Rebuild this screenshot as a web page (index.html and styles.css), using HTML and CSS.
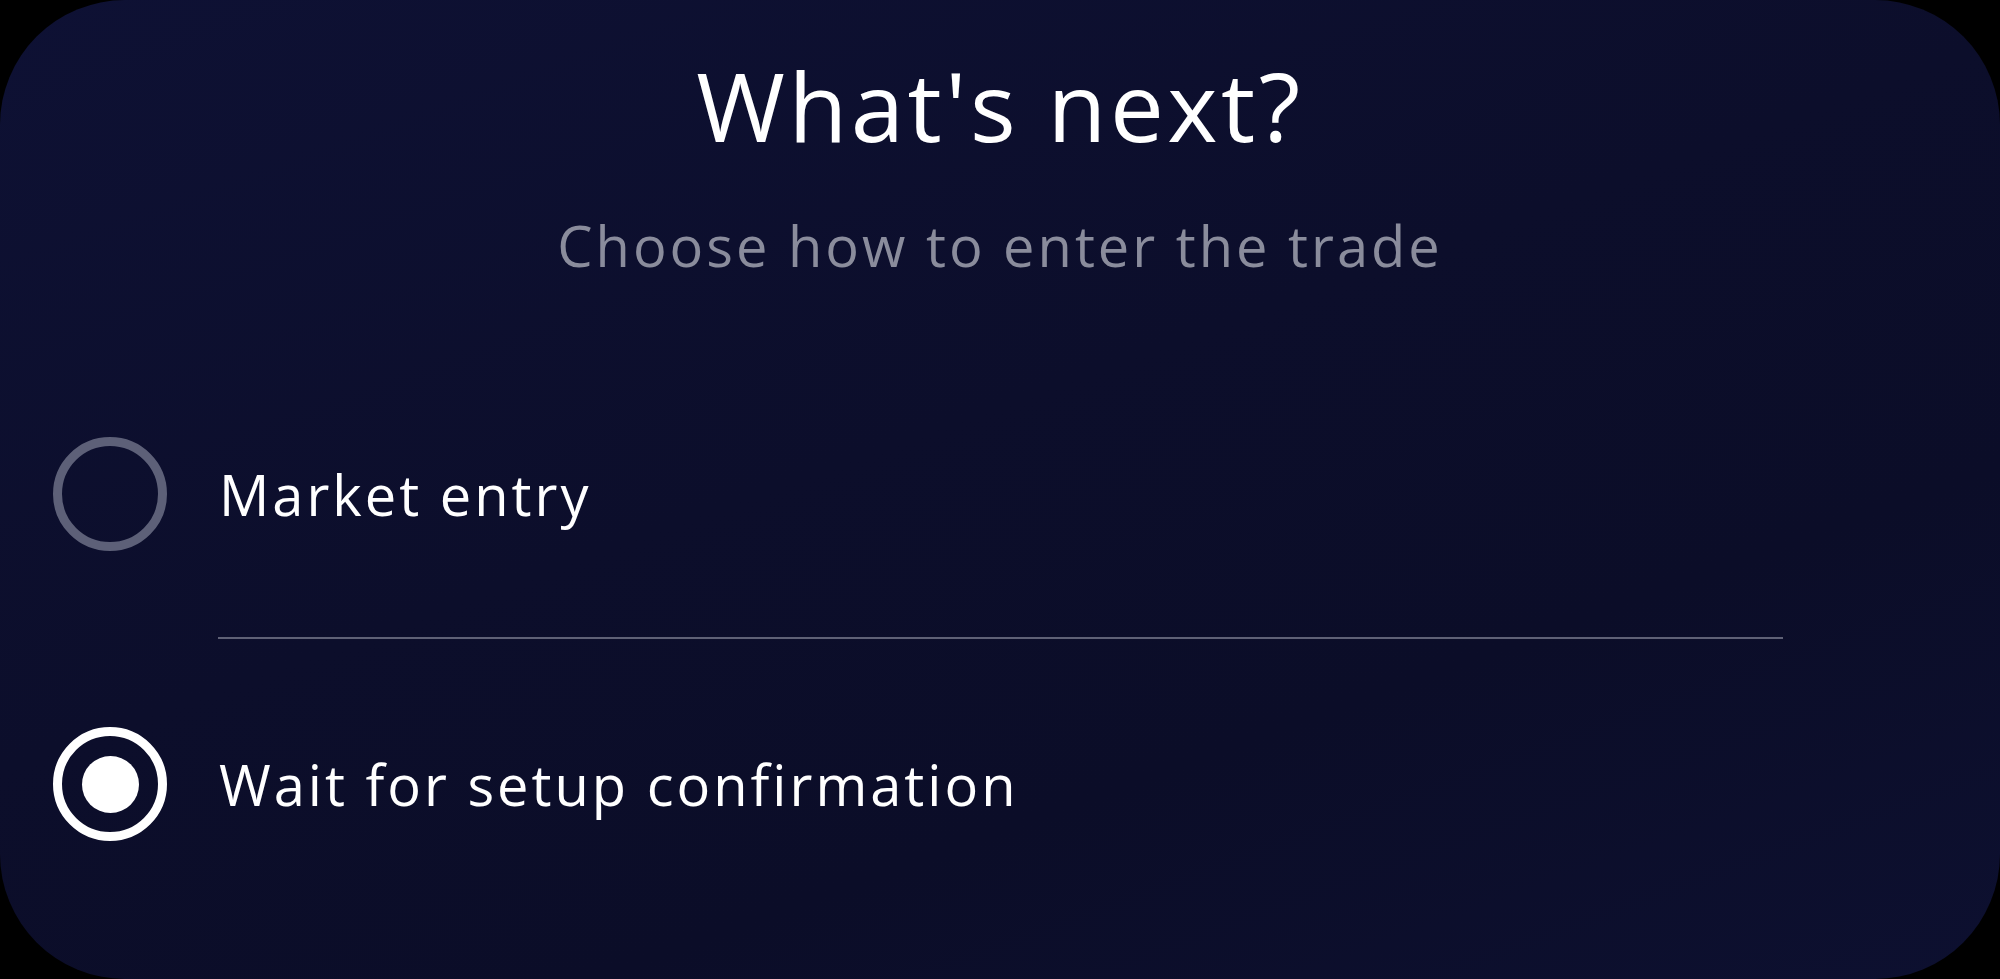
FILE: index.html
```html
<!DOCTYPE html>
<html lang="en">
<head>
<meta charset="utf-8">
<title>What's next?</title>
<link rel="stylesheet" href="styles.css">
</head>
<body>
<main class="card">
  <header class="head">
    <h1 class="title">What's next?</h1>
    <p class="subtitle">Choose how to enter the trade</p>
  </header>
  <div class="options" role="radiogroup">
    <div class="option" role="radio" aria-checked="false">
      <span class="radio"></span>
      <span class="label">Market entry</span>
    </div>
    <div class="divider"></div>
    <div class="option" role="radio" aria-checked="true">
      <span class="radio radio-on"><span class="dot"></span></span>
      <span class="label">Wait for setup confirmation</span>
    </div>
  </div>
</main>
</body>
</html>
```
FILE: styles.css
```css
html, body {
  margin: 0;
  padding: 0;
  background: #000;
}
body {
  width: 2000px;
  height: 979px;
  overflow: hidden;
  font-family: "Open Sans", "Noto Sans", sans-serif;
}
.card {
  box-sizing: border-box;
  width: 2000px;
  height: 979px;
  border-radius: 125px;
  background: linear-gradient(160deg, #0e1134 0%, #0c0e2b 45%, #0b0d28 70%, #0d1030 100%);
  padding-top: 57px;
  display: flex;
  flex-direction: column;
}
.head {
  display: flex;
  flex-direction: column;
  align-items: center;
}
.title {
  margin: 0;
  font-size: 96px;
  line-height: 1;
  font-weight: 500;
  color: #ffffff;
  letter-spacing: 3.5px;
}
.subtitle {
  margin: 64px 0 0;
  font-size: 56px;
  line-height: 1;
  font-weight: 400;
  color: #8a8c9c;
  letter-spacing: 3px;
}
.options {
  margin-top: 76px;
  display: flex;
  flex-direction: column;
}
.option {
  height: 290px;
  display: flex;
  align-items: center;
  padding-left: 53px;
  gap: 52px;
}
.radio {
  box-sizing: border-box;
  width: 114px;
  height: 114px;
  border-radius: 50%;
  border: 9px solid #5d6078;
  flex: none;
  display: flex;
  align-items: center;
  justify-content: center;
}
.radio-on {
  border-color: #ffffff;
}
.dot {
  width: 57px;
  height: 57px;
  border-radius: 50%;
  background: #ffffff;
}
.label {
  font-size: 56px;
  line-height: 1;
  color: #ffffff;
  letter-spacing: 3px;
}
.divider {
  height: 2px;
  margin: -2px 217px 0 218px;
  background: #5f6176;
}
```
